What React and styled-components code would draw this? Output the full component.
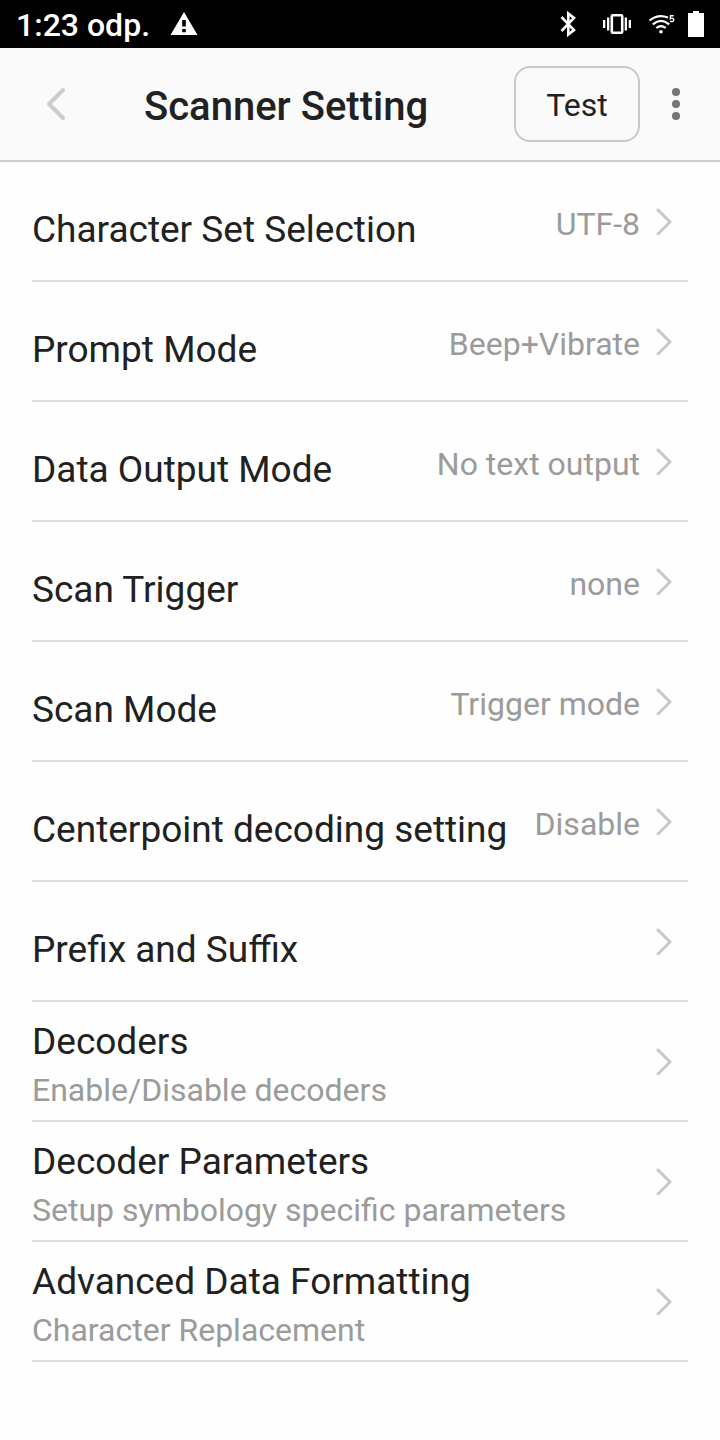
import React from "react";
import styled, { createGlobalStyle } from "styled-components";

const GlobalStyle = createGlobalStyle`
  *, *::before, *::after { box-sizing: border-box; }
  body {
    margin: 0;
    background: #fefefe;
    color: #212121;
    font-family: Roboto, "Liberation Sans", sans-serif;
  }
  button { font: inherit; color: inherit; }
`;

const StatusBar = styled.div`
  display: flex;
  align-items: center;
  justify-content: space-between;
  height: 48px;
  padding: 0 16px;
  background: #000;
  color: #fff;
`;

const StatusGroup = styled.div`
  display: flex;
  align-items: center;
  gap: ${(p) => p.$gap}px;
`;

const Clock = styled.time`
  padding-top: 2px;
  font-size: 32px;
  line-height: 46px;
  font-weight: 500;
`;

const StatusIcon = styled.svg`
  display: block;
  flex: none;
`;

const Header = styled.header`
  display: flex;
  align-items: center;
  height: 114px;
  padding-right: 8px;
  background: #fafafa;
  border-bottom: 2px solid #ccc;
`;

const IconButton = styled.button`
  display: flex;
  align-items: center;
  justify-content: center;
  flex: none;
  width: ${(p) => p.$width}px;
  height: 64px;
  padding: 0;
  border: 0;
  background: none;
  cursor: pointer;
`;

const PageTitle = styled.h1`
  flex: 1;
  margin: 0;
  padding: 6px 0 0 32px;
  font-size: 40px;
  line-height: 48px;
  font-weight: 500;
`;

const TestButton = styled.button`
  flex: none;
  width: 126px;
  height: 76px;
  padding: 2px 0 0;
  border: 2px solid #c8c8c8;
  border-radius: 16px;
  background: none;
  font-size: 32px;
  line-height: 40px;
  cursor: pointer;
`;

const SettingsList = styled.ul`
  margin: 0;
  padding: 0 32px;
  list-style: none;
`;

const RowButton = styled.button`
  display: flex;
  align-items: center;
  gap: 16px;
  width: 100%;
  min-height: 120px;
  padding: 0 16px 0 0;
  border: 0;
  border-bottom: 2px solid #dcdcdc;
  background: none;
  text-align: left;
  cursor: pointer;
`;

const RowText = styled.span`
  display: flex;
  flex: 1;
  flex-direction: column;
  gap: 6px;
  padding-top: ${(p) => (p.$stacked ? 8 : 18)}px;
`;

const RowLabel = styled.span`
  font-size: 37px;
  line-height: 44px;
`;

const RowNote = styled.span`
  padding-top: ${(p) => (p.$inline ? 6 : 0)}px;
  color: #9b9b9b;
  font-size: 32px;
  line-height: 40px;
`;

const Chevron = styled.svg`
  display: block;
  flex: none;
  width: 16px;
  height: 28px;
  fill: none;
  stroke: #c8c8c8;
  stroke-width: 3;
  stroke-linecap: round;
  stroke-linejoin: round;
`;

const settings = [
  { label: "Character Set Selection", value: "UTF-8" },
  { label: "Prompt Mode", value: "Beep+Vibrate" },
  { label: "Data Output Mode", value: "No text output" },
  { label: "Scan Trigger", value: "none" },
  { label: "Scan Mode", value: "Trigger mode" },
  { label: "Centerpoint decoding setting", value: "Disable" },
  { label: "Prefix and Suffix" },
  { label: "Decoders", note: "Enable/Disable decoders" },
  { label: "Decoder Parameters", note: "Setup symbology specific parameters" },
  { label: "Advanced Data Formatting", note: "Character Replacement" },
];

function SettingRow({ label, value, note }) {
  return (
    <li>
      <RowButton type="button">
        <RowText $stacked={Boolean(note)}>
          <RowLabel>{label}</RowLabel>
          {note && <RowNote>{note}</RowNote>}
        </RowText>
        {value && <RowNote $inline>{value}</RowNote>}
        <Chevron viewBox="0 0 16 28" aria-hidden="true">
          <path d="M2 3L14 15L2 27" />
        </Chevron>
      </RowButton>
    </li>
  );
}

export default function App() {
  return (
    <>
      <GlobalStyle />
      <StatusBar>
        <StatusGroup $gap={20}>
          <Clock>1:23 odp.</Clock>
          <StatusIcon width="28" height="24" viewBox="0 0 28 24" fill="#fff" aria-label="Warning">
            <path fillRule="evenodd" d="M14 0L27.500 23H.500zM12.200 8v6.600h3.600V8zM12.200 17v3.200h3.600V17z" />
          </StatusIcon>
        </StatusGroup>
        <StatusGroup $gap={12}>
          <StatusIcon width="28" height="26" viewBox="0 0 28 26" fill="none" stroke="#fff" strokeWidth="2.600" aria-label="Bluetooth">
            <path d="M2.500 6L15 19L9.300 23.500V2.500L15 7L2.500 20" />
          </StatusIcon>
          <StatusIcon width="36" height="26" viewBox="0 0 36 26" aria-label="Vibrate">
            <rect x="12.800" y="4.300" width="10.400" height="17.400" rx="1" fill="none" stroke="#fff" strokeWidth="2.600" />
            <path fill="#fff" d="M4 9h2.300v8H4zM8 6.500h2.300v13H8zM25.700 6.500H28v13h-2.300zM29.700 9H32v8h-2.300z" />
          </StatusIcon>
          <StatusIcon width="29" height="26" viewBox="0 0 29 26" aria-label="Wi-Fi 5">
            <g fill="none" stroke="#fff" strokeWidth="2.200">
              <path d="M2.500 9.500Q11 2.500 21 6.500" />
              <path d="M5.800 13.300Q14 6.600 22.200 13.300" />
              <path d="M9.300 17Q14 13.300 18.700 17" />
            </g>
            <circle cx="14" cy="20.700" r="1.800" fill="#fff" />
            <path fill="none" stroke="#fff" strokeWidth="1.400" d="M26.700 4.700H23.600L23.300 7.700Q26.800 6.700 26.800 9Q26.600 11 23 10.300" />
          </StatusIcon>
          <StatusIcon width="16" height="26" viewBox="0 0 16 26" fill="#fff" aria-label="Battery">
            <path d="M5 0h6v2h5v24H0V2h5z" />
          </StatusIcon>
        </StatusGroup>
      </StatusBar>
      <Header>
        <IconButton $width={112} type="button" aria-label="Back">
          <svg width="20" height="34" viewBox="0 0 20 34" fill="none" stroke="#ccc" strokeWidth="4" strokeLinecap="round" strokeLinejoin="round">
            <path d="M17 3L3 17L17 31" />
          </svg>
        </IconButton>
        <PageTitle>Scanner Setting</PageTitle>
        <TestButton type="button">Test</TestButton>
        <IconButton $width={72} type="button" aria-label="More options">
          <svg width="8" height="32" viewBox="0 0 8 32" fill="#757575">
            <circle cx="4" cy="4" r="4" />
            <circle cx="4" cy="16" r="4" />
            <circle cx="4" cy="28" r="4" />
          </svg>
        </IconButton>
      </Header>
      <main>
        <SettingsList>
          {settings.map((s) => (
            <SettingRow key={s.label} {...s} />
          ))}
        </SettingsList>
      </main>
    </>
  );
}
